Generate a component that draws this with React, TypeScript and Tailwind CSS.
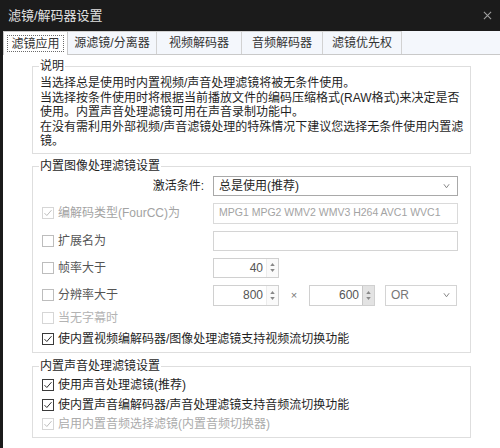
import type { ReactNode } from 'react';

type Tone = 'on' | 'off' | 'dim';

function CheckBox({ checked = false, tone = 'on' }: { checked?: boolean; tone?: Tone }) {
  const border = tone === 'on' ? 'border-[#3a3a3a]' : tone === 'off' ? 'border-[#bdbdbd]' : 'border-[#d6d6d6]';
  return (
    <span className={`flex h-[12px] w-[12px] shrink-0 items-center justify-center border bg-white ${border}`}>
      {checked && (
        <svg viewBox="0 0 12 12" className="h-[10px] w-[10px]">
          <path
            d="M1.8 6.2 4.6 9 10.2 2.6"
            fill="none"
            stroke={tone === 'on' ? '#2a2a2a' : '#bcbcbc'}
            strokeWidth="1.2"
          />
        </svg>
      )}
    </span>
  );
}

function Chevron() {
  return (
    <svg viewBox="0 0 8 6" className="h-[6px] w-[7px]">
      <path d="M1 1 4 5 7 1" fill="none" stroke="#777" strokeWidth="1" />
    </svg>
  );
}

function Spinner({ value, hover = false }: { value: string; hover?: boolean }) {
  return (
    <div className="flex h-full w-[66px] border border-[#d0d0d0] bg-white">
      <span className="flex-1 self-center pr-[3px] text-right text-[#555]">{value}</span>
      <div
        className={`flex w-[12px] flex-col items-center justify-center gap-[3px] border-l ${
          hover ? 'border-[#c8c8c8] bg-[#e3e3e3]' : 'border-[#ececec] bg-[#fafafa]'
        }`}
      >
        <svg viewBox="0 0 6 4" className="h-[3px] w-[5px]">
          <path d="M0 4 3 0 6 4Z" fill="#888" />
        </svg>
        <svg viewBox="0 0 6 4" className="h-[3px] w-[5px]">
          <path d="M0 0 3 4 6 0Z" fill="#888" />
        </svg>
      </div>
    </div>
  );
}

function OptionRow({
  label,
  checked,
  tone,
  textClass,
  className,
  children,
}: {
  label: string;
  checked?: boolean;
  tone: Tone;
  textClass: string;
  className: string;
  children?: ReactNode;
}) {
  return (
    <div className={`flex items-center ${className}`}>
      <div className="flex w-[174px] shrink-0 items-center gap-[4px] pl-[3px]">
        <CheckBox checked={checked} tone={tone} />
        <span className={`whitespace-nowrap ${textClass}`}>{label}</span>
      </div>
      {children}
    </div>
  );
}

const tabs = [
  { label: '源滤镜/分离器', width: 'w-[89px]' },
  { label: '视频解码器', width: 'w-[85px]' },
  { label: '音频解码器', width: 'w-[81px]' },
  { label: '滤镜优先权', width: 'w-[79px]' },
];

export default function App() {
  return (
    <div className="h-[448px] w-[500px] overflow-hidden bg-[#1b1b1b] font-['Liberation_Sans','Noto_Sans_CJK_SC',sans-serif] text-[12px] text-[#1f1f1f]">
      <div className="flex h-[31px] items-center justify-between pl-[8px] pr-[8px]">
        <span className="text-[13px] text-[#e2e2e2]">滤镜/解码器设置</span>
        <svg viewBox="0 0 10 10" className="h-[9px] w-[9px]">
          <path d="M1 1 9 9M9 1 1 9" stroke="#a0a0a0" strokeWidth="1.2" />
        </svg>
      </div>

      <div className="ml-[3px] h-[417px] bg-white">
        <div className="flex h-[24px] items-start border-b border-[#c9c9c9] bg-[#f4f7fc]">
          <div className="-mb-px flex h-[24px] w-[65px] items-center justify-center border-l border-r border-t border-[#c9c9c9] bg-white">
            <span className="flex h-[17px] w-[57px] items-center justify-center border border-dotted border-[#6a6a6a] text-[#333]">
              滤镜应用
            </span>
          </div>
          {tabs.map((t) => (
            <div
              key={t.label}
              className={`flex h-[23px] items-center justify-center border-r border-t border-[#d2d2d2] text-[#333] ${t.width}`}
            >
              {t.label}
            </div>
          ))}
        </div>

        <div className="pl-[29px]">
          <fieldset className="mt-[4px] w-[439px] border border-[#dedede] px-[6px] pb-[4px]">
            <legend className="px-[1px] leading-[15px]">说明</legend>
            <div className="whitespace-nowrap pl-[1px] pt-[2px] leading-[14.5px]">
              <div>当选择总是使用时内置视频/声音处理滤镜将被无条件使用。</div>
              <div>当选择按条件使用时将根据当前播放文件的编码压缩格式(RAW格式)来决定是否</div>
              <div>使用。内置声音处理滤镜可用在声音录制功能中。</div>
              <div>在没有需利用外部视频/声音滤镜处理的特殊情况下建议您选择无条件使用内置滤</div>
              <div>镜。</div>
            </div>
          </fieldset>

          <fieldset className="mt-[5px] w-[439px] border border-[#dedede] px-[6px] pb-[5px]">
            <legend className="px-[1px] leading-[15px]">内置图像处理滤镜设置</legend>
            <div className="mt-[2px] flex h-[20px] items-center">
              <div className="w-[174px] shrink-0 pr-[9px] text-right">激活条件:</div>
              <div className="flex h-full w-[245px] items-center justify-between border border-[#a9a9a9] bg-white pl-[5px] pr-[7px]">
                <span>总是使用(推荐)</span>
                <Chevron />
              </div>
            </div>
            <OptionRow
              label="编解码类型(FourCC)为"
              checked
              tone="dim"
              textClass="text-[#a3a3a3]"
              className="mt-[7px] h-[21px]"
            >
              <div className="flex h-full w-[245px] items-center whitespace-nowrap border border-[#dadada] pl-[5px] text-[10.5px] text-[#a3a3a3]">
                MPG1 MPG2 WMV2 WMV3 H264 AVC1 WVC1
              </div>
            </OptionRow>
            <OptionRow label="扩展名为" tone="off" textClass="text-[#555]" className="mt-[7px] h-[20px]">
              <div className="h-full w-[245px] border border-[#d4d4d4] bg-white" />
            </OptionRow>
            <OptionRow label="帧率大于" tone="off" textClass="text-[#555]" className="mt-[7px] h-[20px]">
              <Spinner value="40" />
            </OptionRow>
            <OptionRow label="分辨率大于" tone="off" textClass="text-[#555]" className="mt-[7px] h-[21px]">
              <Spinner value="800" />
              <span className="w-[30px] text-center text-[11px] text-[#777]">×</span>
              <Spinner value="600" hover />
              <div className="ml-[10px] flex h-full w-[72px] items-center justify-between border border-[#d4d4d4] pl-[5px] pr-[6px] text-[#777]">
                <span>OR</span>
                <Chevron />
              </div>
            </OptionRow>
            <OptionRow label="当无字幕时" tone="dim" textClass="text-[#b3b3b3]" className="mt-[4px] h-[16px]" />
            <OptionRow
              label="使内置视频编解码器/图像处理滤镜支持视频流切换功能"
              checked
              tone="on"
              textClass="text-[#1f1f1f]"
              className="mt-[5px] h-[16px]"
            />
          </fieldset>

          <fieldset className="mt-[6px] w-[439px] border border-[#dedede] px-[6px] pb-[5px]">
            <legend className="px-[1px] leading-[15px]">内置声音处理滤镜设置</legend>
            <OptionRow
              label="使用声音处理滤镜(推荐)"
              checked
              tone="on"
              textClass="text-[#1f1f1f]"
              className="mt-[3px] h-[16px]"
            />
            <OptionRow
              label="使内置声音编解码器/声音处理滤镜支持音频流切换功能"
              checked
              tone="on"
              textClass="text-[#1f1f1f]"
              className="mt-[4px] h-[16px]"
            />
            <OptionRow
              label="启用内置音频选择滤镜(内置音频切换器)"
              checked
              tone="dim"
              textClass="text-[#ababab]"
              className="mt-[3px] h-[16px]"
            />
          </fieldset>
        </div>
      </div>
    </div>
  );
}
